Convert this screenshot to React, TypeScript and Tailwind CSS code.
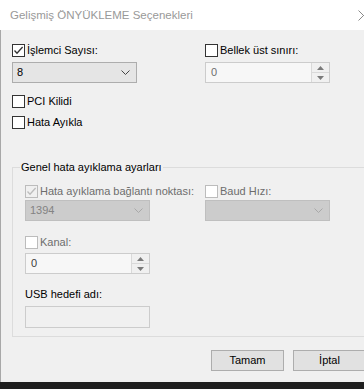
import React from "react";

type BoxProps = { checked?: boolean; disabled?: boolean; white?: boolean };

function CheckBox({ checked, disabled, white }: BoxProps) {
  const border = disabled ? "border-[#bcbcbc]" : "border-[#333333]";
  const bg = disabled && !white ? "bg-[#f0f0f0]" : "bg-white";
  return (
    <span className={`flex h-[13px] w-[13px] shrink-0 items-center justify-center border ${border} ${bg}`}>
      {checked && (
        <svg width="11" height="11" viewBox="0 0 11 11">
          <path
            d="M1.5 5.5 L4 8.2 L9.6 2"
            fill="none"
            stroke={disabled ? "#bcbcbc" : "#333333"}
            strokeWidth="1.3"
          />
        </svg>
      )}
    </span>
  );
}

function CheckRow({ label, checked, disabled, white }: BoxProps & { label: string }) {
  return (
    <div className="flex h-[13px] items-center gap-[2px]">
      <CheckBox checked={checked} disabled={disabled} white={white} />
      <span className={disabled ? "text-[#6d6d6d]" : "text-black"}>{label}</span>
    </div>
  );
}

function Chevron({ color }: { color: string }) {
  return (
    <svg width="9" height="5" viewBox="0 0 9 5" className="mr-[6px]">
      <path d="M0.5 0.5 L4.5 4.5 L8.5 0.5" fill="none" stroke={color} strokeWidth="1" />
    </svg>
  );
}

function Combo({ value, disabled }: { value: string; disabled?: boolean }) {
  return (
    <div
      className={`flex h-[21px] w-[125px] items-center justify-between border pl-[4px] ${
        disabled ? "border-[#bfbfbf] bg-[#cccccc] text-[#838383]" : "border-[#adadad] bg-[#e5e5e5] text-black"
      }`}
    >
      <span>{value}</span>
      <Chevron color={disabled ? "#a8a8a8" : "#444444"} />
    </div>
  );
}

function SpinBox({ value, textColor }: { value: string; textColor: string }) {
  return (
    <div className="flex h-[21px] w-[125px] border border-[#cccccc] bg-[#f7f7f7]">
      <span className={`flex flex-1 items-center pl-[5px] ${textColor}`}>{value}</span>
      <div className="flex w-[18px] flex-col border-l border-[#d9d9d9] bg-[#f0f0f0]">
        <div className="flex flex-1 items-center justify-center border-b border-[#d9d9d9]">
          <svg width="7" height="4" viewBox="0 0 7 4">
            <path d="M0 4 L3.5 0 L7 4 Z" fill="#7a7a7a" />
          </svg>
        </div>
        <div className="flex flex-1 items-center justify-center">
          <svg width="7" height="4" viewBox="0 0 7 4">
            <path d="M0 0 L3.5 4 L7 0 Z" fill="#7a7a7a" />
          </svg>
        </div>
      </div>
    </div>
  );
}

function Button({ label }: { label: string }) {
  return (
    <div className="flex h-[21px] w-[73px] shrink-0 items-center justify-center border border-[#adadad] bg-[#e1e1e1] text-black">
      {label}
    </div>
  );
}

export default function App() {
  return (
    <div className="flex h-[389px] w-[364px] flex-col overflow-hidden bg-[#f0f0f0] font-['Liberation_Sans',Arial,sans-serif] text-[11px] leading-[13px]">
      <div className="relative flex h-[30px] shrink-0 items-center bg-white pl-[10px] text-[11.5px] text-[#999999]">
        Gelişmiş ÖNYÜKLEME Seçenekleri
        <svg width="11" height="11" viewBox="0 0 11 11" className="absolute left-[358px] top-[10px]">
          <path d="M0.5 0.5 L10.5 10.5 M10.5 0.5 L0.5 10.5" stroke="#8a8a8a" strokeWidth="1" />
        </svg>
      </div>

      <div className="flex flex-1 flex-col border-l border-[#a8a8a8]">
        <div className="flex pt-[14px] pl-[11px]">
          <div className="flex w-[193px] flex-col gap-[5px]">
            <CheckRow label="İşlemci Sayısı:" checked />
            <Combo value="8" />
          </div>
          <div className="flex flex-col gap-[5px]">
            <CheckRow label="Bellek üst sınırı:" />
            <SpinBox value="0" textColor="text-[#6d6d6d]" />
          </div>
        </div>

        <div className="mt-[12px] flex flex-col gap-[8px] pl-[11px]">
          <CheckRow label="PCI Kilidi" />
          <CheckRow label="Hata Ayıkla" />
        </div>

        <div className="relative mt-[38px] ml-[11px] w-[370px] border-t border-l border-b border-[#dcdcdc] pl-[12px] pt-[17px] pb-[8px]">
          <span className="absolute left-[7px] top-[-7px] bg-[#f0f0f0] px-[1px] text-black">
            Genel hata ayıklama ayarları
          </span>
          <div className="flex">
            <div className="flex w-[180px] flex-col gap-[2px]">
              <CheckRow label="Hata ayıklama bağlantı noktası:" checked disabled />
              <Combo value="1394" disabled />
            </div>
            <div className="flex flex-col gap-[2px]">
              <CheckRow label="Baud Hızı:" disabled white />
              <Combo value="" disabled />
            </div>
          </div>
          <div className="mt-[15px] flex flex-col gap-[4px]">
            <CheckRow label="Kanal:" disabled white />
            <SpinBox value="0" textColor="text-[#3c3c3c]" />
          </div>
          <div className="mt-[14px] text-black">USB hedefi adı:</div>
          <div className="mt-[5px] h-[22px] w-[125px] border border-[#cccccc] bg-[#f0f0f0]" />
        </div>

        <div className="mt-[13px] flex gap-[9px] pl-[210px]">
          <Button label="Tamam" />
          <Button label="İptal" />
        </div>
      </div>

      <div className="h-[7px] shrink-0 bg-[#1f1f1f]" />
    </div>
  );
}
